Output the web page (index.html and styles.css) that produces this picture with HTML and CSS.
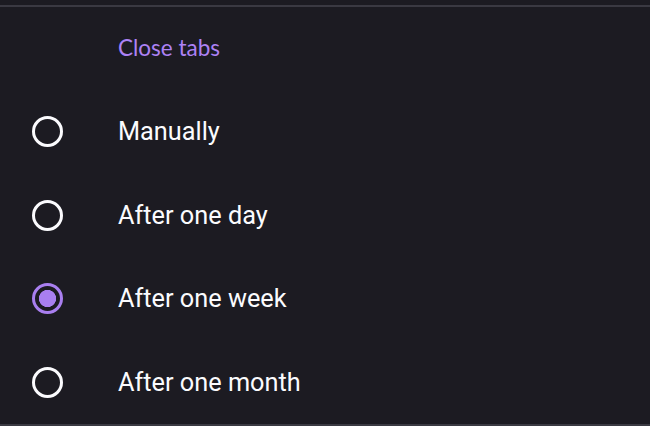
FILE: index.html
```html
<!DOCTYPE html>
<html>
<head>
<meta charset="utf-8">
<link rel="stylesheet" href="styles.css">
</head>
<body>
<div class="screen">
  <div class="topbar"></div>
  <div class="title">Close tabs</div>
  <div class="list">
    <div class="row">
      <span class="radio"></span>
      <span class="label">Manually</span>
    </div>
    <div class="row">
      <span class="radio"></span>
      <span class="label">After one day</span>
    </div>
    <div class="row">
      <span class="radio checked"></span>
      <span class="label">After one week</span>
    </div>
    <div class="row">
      <span class="radio"></span>
      <span class="label">After one month</span>
    </div>
  </div>
  <div class="bottombar"></div>
</div>
</body>
</html>
```

FILE: styles.css
```css
html, body {
  margin: 0;
  padding: 0;
  background: #1c1b22;
}
.screen {
  width: 650px;
  height: 426px;
  overflow: hidden;
  background: #1c1b22;
  display: flex;
  flex-direction: column;
}
.topbar {
  height: 5px;
  border-bottom: 2px solid #3a3942;
  flex: none;
}
.title {
  height: 83px;
  flex: none;
  display: flex;
  align-items: center;
  padding-left: 118px;
  box-sizing: border-box;
  padding-bottom: 3px;
  font-family: "Lato", "Open Sans", sans-serif;
  font-size: 22.5px;
  color: #ad82f5;
}
.list {
  display: flex;
  flex-direction: column;
  flex: none;
}
.row {
  height: 83.5px;
  display: flex;
  align-items: center;
}
.radio {
  width: 94px;
  height: 31px;
  display: flex;
  justify-content: center;
  align-items: center;
  flex: none;
}
.radio::before {
  content: "";
  width: 25px;
  height: 25px;
  border: 3px solid #fbfbfe;
  border-radius: 50%;
  box-sizing: content-box;
  display: block;
}
.radio.checked::before {
  border-color: #a97ff0;
  background: radial-gradient(circle, #a97ff0 0, #a97ff0 8.3px, transparent 8.9px);
}
.label {
  padding-left: 24px;
  font-family: "Roboto", sans-serif;
  font-size: 25.3px;
  color: #fbfbfe;
}
.bottombar {
  flex: none;
  border-top: 3px solid #3a3942;
}
```
